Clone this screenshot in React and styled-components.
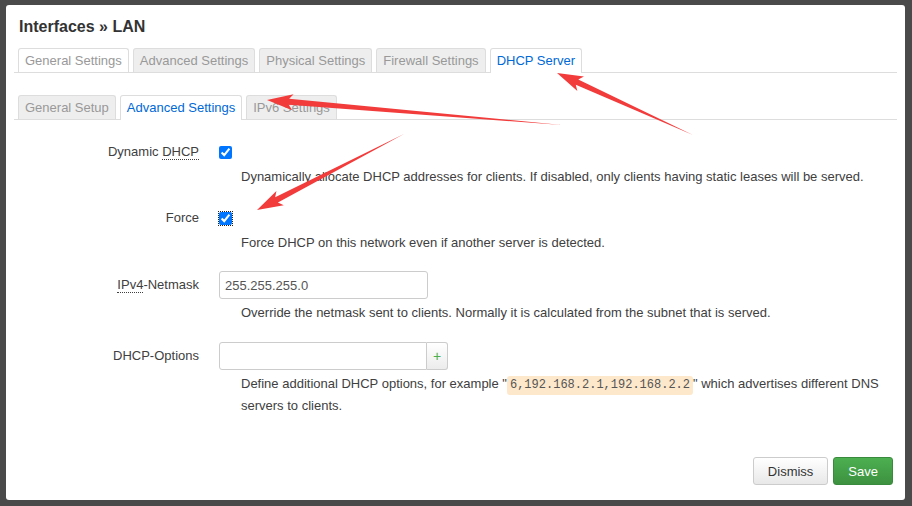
import styled, { createGlobalStyle } from "styled-components";

const GlobalStyle = createGlobalStyle`
  body {
    margin: 0;
    background: #4a4a4a;
    font-family: "Liberation Sans", Arial, sans-serif;
  }
`;

const Backdrop = styled.div`
  position: relative;
  width: 912px;
  height: 506px;
  box-sizing: border-box;
  padding: 5px 7px 6px 6px;
  overflow: hidden;
`;

const Modal = styled.div`
  display: flex;
  flex-direction: column;
  width: 899px;
  height: 495px;
  box-sizing: border-box;
  padding: 12px 8px 15px 8px;
  background: #fff;
  border-radius: 3px;
`;

const Title = styled.h3`
  margin: 0 0 11px 5px;
  font-size: 16px;
  line-height: 20px;
  font-weight: bold;
  color: #333;
`;

const TabList = styled.ul`
  display: flex;
  gap: 4px;
  margin: ${(p) => (p.$sub ? "22px 0 0" : "0")};
  padding: 0 0 0 4px;
  list-style: none;
  border-bottom: 1px solid #ddd;
`;

const Tab = styled.li`
  height: ${(p) => (p.$active ? "24px" : "23px")};
  margin-bottom: ${(p) => (p.$active ? "-1px" : "0")};
  padding: 0 6px;
  border: 1px solid #ddd;
  border-bottom: none;
  border-radius: 3px 3px 0 0;
  background: ${(p) => (p.$active || p.$light ? "#fff" : "#eee")};
  color: ${(p) => (p.$active ? "#0069d6" : "#999")};
  font-size: 13px;
  line-height: 23px;
  white-space: nowrap;
`;

const Form = styled.div`
  display: flex;
  flex-direction: column;
`;

const Row = styled.div`
  display: grid;
  grid-template-columns: 185px 1fr;
  column-gap: 20px;
  margin-top: ${(p) => p.$space}px;
`;

const Label = styled.label`
  text-align: right;
  font-size: 13px;
  line-height: ${(p) => (p.$tall ? "28px" : "22px")};
  color: #404040;
`;

const Abbr = styled.abbr`
  text-decoration: none;
  border-bottom: 1px dotted #404040;
`;

const Control = styled.div`
  display: flex;
  align-items: center;
  height: ${(p) => (p.$tall ? "28px" : "22px")};
`;

const Check = styled.input.attrs({ type: "checkbox" })`
  width: 13px;
  height: 13px;
  margin: 0;
  accent-color: #0075ff;
  outline: ${(p) => (p.$focus ? "1px dotted #222" : "none")};
  outline-offset: 0;
`;

const TextInput = styled.input`
  width: ${(p) => p.$w}px;
  height: 28px;
  box-sizing: border-box;
  margin: 0;
  padding: 0 5px;
  border: 1px solid #ccc;
  border-radius: ${(p) => (p.$group ? "3px 0 0 3px" : "3px")};
  font-family: inherit;
  font-size: 13px;
  color: #555;
`;

const AddButton = styled.button`
  width: 21px;
  height: 28px;
  margin: 0;
  padding: 0;
  border: 1px solid #ccc;
  border-left: none;
  border-radius: 0 3px 3px 0;
  background: linear-gradient(#fff, #ececec);
  color: #4cae4c;
  font-family: inherit;
  font-size: 14px;
`;

const Desc = styled.div`
  grid-column: 2;
  margin-top: 3px;
  padding-left: 22px;
  font-size: 13px;
  line-height: 22px;
  color: #404040;
`;

const Code = styled.code`
  display: inline-block;
  padding: 0 3px;
  border-radius: 3px;
  background: #fde8cb;
  font-family: "Liberation Mono", "DejaVu Sans Mono", monospace;
  font-size: 12px;
  line-height: 19px;
  color: #555;
`;

const Footer = styled.div`
  display: flex;
  justify-content: flex-end;
  gap: 5px;
  margin-top: auto;
  padding-right: 4px;
`;

const Button = styled.button`
  height: 28px;
  padding: 0 14px;
  border: 1px solid ${(p) => (p.$primary ? "#3a8a3e" : "#ccc")};
  border-radius: 3px;
  background: ${(p) =>
    p.$primary ? "linear-gradient(#4caf50, #3d9140)" : "linear-gradient(#fff, #e8e8e8)"};
  color: ${(p) => (p.$primary ? "#fff" : "#333")};
  font-family: inherit;
  font-size: 13px;
`;

const Marks = styled.svg`
  position: absolute;
  top: 0;
  left: 0;
  pointer-events: none;
`;

// screenshot annotation arrows: tail is a point, shaft widens to the head
function arrowPoints([x1, y1], [x2, y2], head = 22, wing = 8, shaft = 3) {
  const dx = x2 - x1;
  const dy = y2 - y1;
  const len = Math.hypot(dx, dy);
  const ux = dx / len;
  const uy = dy / len;
  const nx = -uy;
  const ny = ux;
  const bx = x2 - ux * head;
  const by = y2 - uy * head;
  const wx = x2 - ux * (head + 4);
  const wy = y2 - uy * (head + 4);
  const pts = [
    [x1, y1],
    [bx + nx * shaft, by + ny * shaft],
    [wx + nx * wing, wy + ny * wing],
    [x2, y2],
    [wx - nx * wing, wy - ny * wing],
    [bx - nx * shaft, by - ny * shaft],
  ];
  return pts.map((p) => p.join(",")).join(" ");
}

const arrows = [
  { from: [693, 135], to: [557, 73] },
  { from: [562, 125], to: [267, 100] },
  { from: [404, 134], to: [257, 210] },
];

function App() {
  return (
    <>
      <GlobalStyle />
      <Backdrop>
        <Modal>
          <Title>Interfaces » LAN</Title>
          <TabList>
            <Tab $light>General Settings</Tab>
            <Tab>Advanced Settings</Tab>
            <Tab>Physical Settings</Tab>
            <Tab>Firewall Settings</Tab>
            <Tab $active>DHCP Server</Tab>
          </TabList>
          <TabList $sub>
            <Tab>General Setup</Tab>
            <Tab $active>Advanced Settings</Tab>
            <Tab>IPv6 Settings</Tab>
          </TabList>

          <Form>
            <Row $space={21}>
              <Label>
                Dynamic <Abbr title="Dynamic Host Configuration Protocol">DHCP</Abbr>
              </Label>
              <Control>
                <Check defaultChecked />
              </Control>
              <Desc>
                Dynamically allocate DHCP addresses for clients. If disabled, only clients having
                static leases will be served.
              </Desc>
            </Row>
            <Row $space={19}>
              <Label>Force</Label>
              <Control>
                <Check defaultChecked $focus />
              </Control>
              <Desc>Force DHCP on this network even if another server is detected.</Desc>
            </Row>
            <Row $space={17}>
              <Label $tall>
                <Abbr title="Internet Protocol Version 4">IPv4</Abbr>-Netmask
              </Label>
              <Control $tall>
                <TextInput $w={209} defaultValue="255.255.255.0" />
              </Control>
              <Desc>
                Override the netmask sent to clients. Normally it is calculated from the subnet
                that is served.
              </Desc>
            </Row>
            <Row $space={18}>
              <Label $tall>DHCP-Options</Label>
              <Control $tall>
                <TextInput $w={208} $group />
                <AddButton>+</AddButton>
              </Control>
              <Desc>
                <span>Define additional DHCP options, for example "</span>
                <Code>6,192.168.2.1,192.168.2.2</Code>
                <span>" which advertises different DNS</span> <span>servers to clients.</span>
              </Desc>
            </Row>
          </Form>

          <Footer>
            <Button>Dismiss</Button>
            <Button $primary>Save</Button>
          </Footer>
        </Modal>

        <Marks width="912" height="506">
          {arrows.map((a, i) => (
            <polygon key={i} points={arrowPoints(a.from, a.to)} fill="#f23b3b" />
          ))}
        </Marks>
      </Backdrop>
    </>
  );
}

export default App;
